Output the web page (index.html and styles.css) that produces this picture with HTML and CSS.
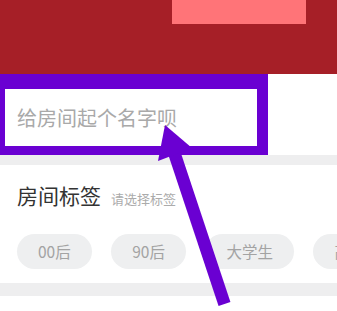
FILE: index.html
```html
<!DOCTYPE html>
<html lang="zh">
<head>
<meta charset="utf-8">
<link rel="stylesheet" href="styles.css">
</head>
<body>
<div class="page">
  <header class="header">
    <div class="header-btn"></div>
  </header>
  <section class="name-row">
    <div class="highlight">
      <div class="name-input">给房间起个名字呗</div>
    </div>
  </section>
  <div class="sep sep-top"></div>
  <section class="tags">
    <div class="tags-title">
      <span class="title">房间标签</span>
      <span class="hint">请选择标签</span>
    </div>
    <div class="tag-list">
      <span class="tag">00后</span>
      <span class="tag">90后</span>
      <span class="tag">大学生</span>
      <span class="tag">高颜值</span>
    </div>
  </section>
  <div class="sep sep-bottom"></div>
  <svg class="arrow" width="337" height="311" viewBox="0 0 337 311">
    <line x1="173.3" y1="150" x2="224.5" y2="304" stroke="#6a00d2" stroke-width="12.5"/>
    <polygon points="165,125 158,161 192,148" fill="#6a00d2"/>
  </svg>
</div>
</body>
</html>
```
FILE: styles.css
```css
html, body {
  margin: 0;
  padding: 0;
  background: #ffffff;
}
body {
  font-family: "Noto Sans CJK SC", "Noto Sans", sans-serif;
  width: 337px;
  height: 311px;
  overflow: hidden;
}
.page {
  position: relative;
  width: 337px;
  height: 311px;
  overflow: hidden;
}
.header {
  height: 74px;
  background: #a61f27;
  display: flex;
  padding-left: 172px;
  box-sizing: border-box;
}
.header-btn {
  width: 134px;
  height: 24px;
  background: #ff7478;
}
.name-row {
  height: 81px;
  display: flex;
}
.highlight {
  width: 268px;
  box-sizing: border-box;
  border-style: solid;
  border-color: #6a00d2;
  border-width: 15px 11px 9px 5px;
  display: flex;
  align-items: center;
}
.name-input {
  padding-left: 12px;
  font-size: 20px;
  line-height: 28px;
  color: #a9a9a9;
}
.sep {
  background: #eeeeef;
}
.sep-top {
  height: 10px;
}
.sep-bottom {
  height: 13px;
}
.tags {
  padding: 15px 0 14px 17px;
}
.tags-title {
  display: flex;
  align-items: baseline;
  gap: 10px;
  height: 30px;
}
.title {
  font-size: 21px;
  line-height: 30px;
  color: #333333;
}
.hint {
  font-size: 13px;
  color: #ababab;
}
.tag-list {
  margin-top: 24px;
  display: flex;
  gap: 19.5px;
  white-space: nowrap;
}
.tag {
  flex: none;
  height: 35px;
  line-height: 35px;
  padding: 0 21px;
  border-radius: 18px;
  background: #eeeff0;
  color: #a3a3a3;
  font-size: 15.5px;
}
.arrow {
  position: absolute;
  top: 0;
  left: 0;
  pointer-events: none;
}
```
